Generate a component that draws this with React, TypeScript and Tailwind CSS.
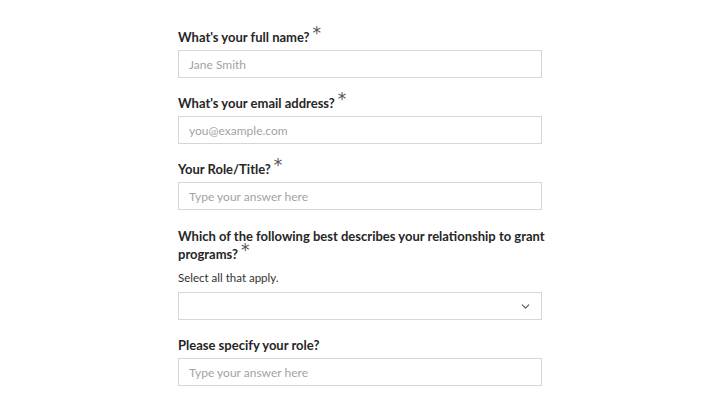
import { ChevronDown } from 'lucide-react'

const font = { fontFamily: 'Lato, "Noto Sans", sans-serif' }

function Label({ children, required }: { children: React.ReactNode; required?: boolean }) {
  return (
    <div className="w-[376px] text-[13px] leading-[18px] font-bold text-[#262626]">
      {children}
      {required && (
        <span
          className="ml-[3px] text-[17px] leading-[0] font-normal text-[#555] relative top-[-3px]"
          style={{ fontFamily: '"DejaVu Sans", sans-serif' }}
        >
          *
        </span>
      )}
    </div>
  )
}

function TextInput({ placeholder }: { placeholder: string }) {
  return (
    <input
      className="mt-[4px] block w-full h-[28px] border border-[#d6d6d6] bg-white px-[10px] text-[12px] text-[#333] placeholder:text-[#a3a3a3] outline-none"
      placeholder={placeholder}
      style={font}
    />
  )
}

export default function App() {
  return (
    <div className="min-h-[405px] bg-white" style={font}>
      <div className="w-[364px] ml-[178px] pt-[28px]">
        <Label required>What's your full name?</Label>
        <TextInput placeholder="Jane Smith" />

        <div className="mt-[16px]">
          <Label required>What's your email address?</Label>
          <TextInput placeholder="you@example.com" />
        </div>

        <div className="mt-[16px]">
          <Label required>Your Role/Title?</Label>
          <TextInput placeholder="Type your answer here" />
        </div>

        <div className="mt-[17px]">
          <Label required>Which of the following best describes your relationship to grant programs?</Label>
          <div className="mt-[7px] text-[11.5px] leading-[16px] text-[#333]">Select all that apply.</div>
          <div className="mt-[6px] h-[28px] border border-[#d6d6d6] flex items-center justify-end pr-[9px]">
            <ChevronDown size={13} strokeWidth={2} className="text-[#555]" />
          </div>
        </div>

        <div className="mt-[16px]">
          <Label>Please specify your role?</Label>
          <TextInput placeholder="Type your answer here" />
        </div>
      </div>
    </div>
  )
}
